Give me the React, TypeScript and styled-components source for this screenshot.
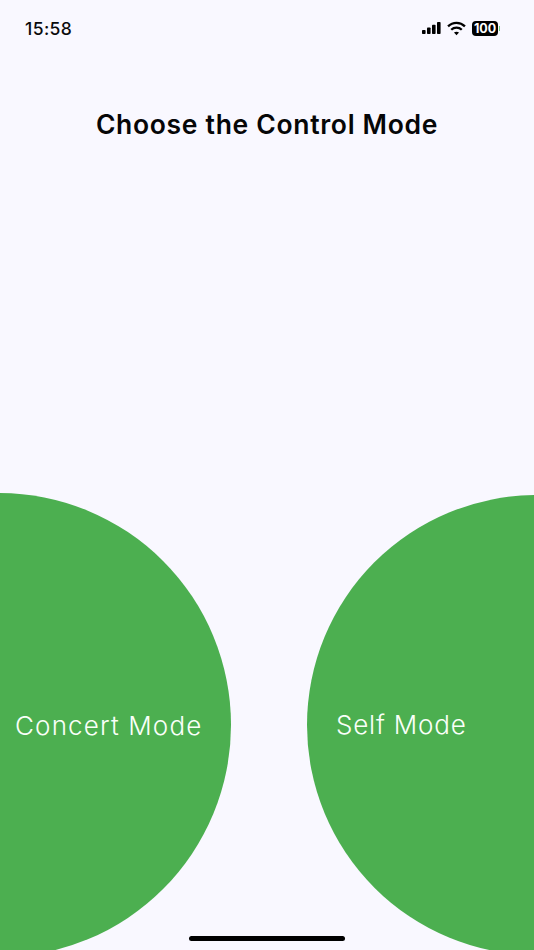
import React from "react";
import styled, { createGlobalStyle } from "styled-components";

const Global = createGlobalStyle`
  html, body { margin: 0; padding: 0; background: #f9f8ff; }
  #root { width: 534px; height: 950px; }
`;

const Screen = styled.div`
  position: relative;
  width: 534px;
  height: 950px;
  overflow: hidden;
  background: #f9f8ff;
  font-family: Inter, "Liberation Sans", sans-serif;
  display: flex;
  flex-direction: column;
`;

const StatusBar = styled.div`
  height: 20px;
  margin-top: 18px;
  padding: 0 36px 0 25px;
  display: flex;
  align-items: center;
  justify-content: space-between;
`;

const Clock = styled.span`
  font-size: 17.5px;
  font-weight: 500;
  letter-spacing: 0.4px;
  color: #0b0b0c;
`;

const StatusIcons = styled.div`
  display: flex;
  align-items: center;
  gap: 6px;
`;

const Battery = styled.div`
  position: relative;
  width: 26px;
  height: 15px;
  border-radius: 4px;
  background: #000;
  color: #fff;
  font-size: 12.5px;
  font-weight: 700;
  line-height: 15px;
  text-align: center;
  letter-spacing: -0.1px;
  &::after {
    content: "";
    position: absolute;
    right: -2px;
    top: 5px;
    width: 1px;
    height: 5px;
    background: #6fce7c;
  }
`;

const Title = styled.h1`
  margin: 70px 0 0;
  text-align: center;
  font-size: 26.5px;
  line-height: 32px;
  font-weight: 600;
  letter-spacing: 0.68px;
  color: #060607;
`;

const CircleRow = styled.div`
  margin-top: 353px;
  display: flex;
  justify-content: space-between;
  align-items: center;
`;

const ModeCircle = styled.button<{ $size: number; $bleed: number; $side: "left" | "right" }>`
  flex: none;
  width: ${(p) => p.$size}px;
  height: ${(p) => p.$size}px;
  border: 0;
  border-radius: 50%;
  padding: 0;
  background: #4caf50;
  color: #fafff9;
  font-family: inherit;
  font-size: 26px;
  font-weight: 300;
  display: flex;
  align-items: center;
  margin-${(p) => p.$side}: -${(p) => p.$bleed}px;
`;

const ModeLabel = styled.span<{ $inset: number; $tracking: number; $lift: number }>`
  margin-left: ${(p) => p.$inset}px;
  margin-bottom: ${(p) => p.$lift}px;
  letter-spacing: ${(p) => p.$tracking}px;
  white-space: nowrap;
`;

const HomeIndicator = styled.div`
  position: absolute;
  left: 189px;
  bottom: 9px;
  width: 156px;
  height: 5px;
  border-radius: 3px;
  background: #000;
`;

export default function App() {
  return (
    <Screen>
      <Global />
      <StatusBar>
        <Clock>15:58</Clock>
        <StatusIcons>
          <svg width="19" height="14" viewBox="0 0 19 13" fill="#000">
            <rect x="0" y="8.5" width="3.6" height="4" rx="0.8" />
            <rect x="5" y="6" width="3.6" height="6.5" rx="0.8" />
            <rect x="10" y="3.2" width="3.6" height="9.3" rx="0.8" />
            <rect x="15" y="0.5" width="3.6" height="12" rx="0.8" />
          </svg>
          <svg width="19" height="15" viewBox="0 0 18 14" fill="none" stroke="#000" strokeWidth="2.2">
            <path d="M1 5 C5.5 0.6 12.5 0.6 17 5" />
            <path d="M4 8.2 C6.8 5.6 11.2 5.6 14 8.2" />
            <path d="M9 13.4 L6.6 10.9 C8 9.8 10 9.8 11.4 10.9 Z" fill="#000" stroke="none" />
          </svg>
          <Battery>100</Battery>
        </StatusIcons>
      </StatusBar>
      <Title>Choose the Control Mode</Title>
      <CircleRow>
        <ModeCircle $size={464} $bleed={233} $side="left">
          <ModeLabel $inset={248} $tracking={1.15} $lift={0}>Concert Mode</ModeLabel>
        </ModeCircle>
        <ModeCircle $size={460} $bleed={233} $side="right">
          <ModeLabel $inset={29} $tracking={0.8} $lift={2}>Self Mode</ModeLabel>
        </ModeCircle>
      </CircleRow>
      <HomeIndicator />
    </Screen>
  );
}
